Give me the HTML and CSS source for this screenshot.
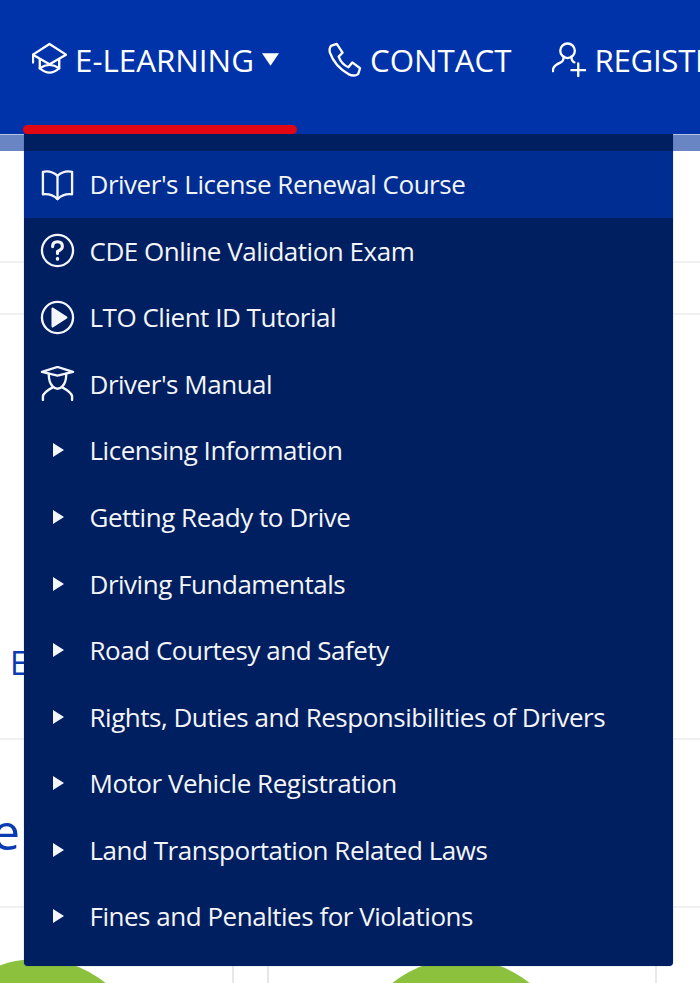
FILE: index.html
```html
<!DOCTYPE html>
<html lang="en">
<head>
	<title>E-Learning menu</title>
	<meta charset="utf-8">
	<link rel="stylesheet" href="styles.css">
</head>
<body>
	<nav class="topBar">
		<a class="navItem navItem_learning">
			<svg class="navIcon" viewBox="0 0 36 36"><path d="M18 2 L35 13 L18 23 L1 13 Z"/><path d="M8 18 V27 Q18 36 28 27 V18"/><path d="M8 27 Q18 20 28 27"/><path d="M1 13 V21"/></svg>
			E-LEARNING
			<svg class="caret" viewBox="0 0 18 13"><path d="M0 0 H18 L9 13 Z"/></svg>
		</a>
		<a class="navItem">
			<svg class="navIcon" viewBox="0 0 36 36"><path d="M4 4 L10 2 L16 11 L12 15 Q15 23 22 26 L26 21 L34 27 L32 33 Q28 36 22 33 Q8 25 3 11 Q2 7 4 4 Z"/></svg>
			CONTACT
		</a>
		<a class="navItem navItem_register">
			<svg class="navIcon" viewBox="0 0 36 36"><circle cx="16" cy="9" r="7.5"/><path d="M1 30 V28 Q2 24 9 21 Q12 20 12 15 M20 15 Q20 20 23 21"/><path d="M27 22 V35 M20 29 H34"/></svg>
			REGISTER
		</a>
	</nav>

	<div class="page">
		<div class="strip"></div>
		<div class="row row_a"></div>
		<div class="row row_b"></div>
		<div class="row row_c"><span class="smallWord">E</span></div>
		<div class="row row_d"><span class="bigWord">e</span></div>
		<div class="row_e">
			<div class="cell cell_a"><span class="ball ball_left"></span></div>
			<div class="cell cell_b"></div>
			<div class="cell cell_c"><span class="ball ball_right"></span></div>
		</div>
	</div>

	<section class="dropMenu">
		<a class="menuItem menuItem_active">
			<span class="menuIcon"><svg viewBox="0 0 36 36"><path d="M18 9 Q11 3 3 5 V28 Q12 27 18 33 Q24 27 33 28 V5 Q25 3 18 9 Z"/><path d="M18 9 V33"/></svg></span>
			Driver's License Renewal Course
		</a>
		<a class="menuItem">
			<span class="menuIcon"><svg viewBox="0 0 36 36"><circle cx="18" cy="18" r="16"/><path class="thick" d="M13 14 Q13 9 18 9 Q23 9 23 14 Q23 17 18 19 V21"/><path class="thick" d="M18 26 V27"/></svg></span>
			CDE Online Validation Exam
		</a>
		<a class="menuItem">
			<span class="menuIcon"><svg viewBox="0 0 36 36"><circle cx="18" cy="18" r="16"/><path class="solid" d="M13 9 L27 18 L13 27 Z"/></svg></span>
			LTO Client ID Tutorial
		</a>
		<a class="menuItem">
			<span class="menuIcon"><svg viewBox="0 0 36 36"><path d="M18 1 L34 6 L18 10 L2 6 Z"/><path d="M9 8 Q9 17 13 21 Q18 26 23 21 Q27 17 27 8"/><path d="M3 35 V31 Q4 27 13 22 M33 35 V31 Q32 27 23 22"/></svg></span>
			Driver's Manual
		</a>
		<a class="menuItem"><span class="menuIcon"><i class="tri"></i></span>Licensing Information</a>
		<a class="menuItem"><span class="menuIcon"><i class="tri"></i></span>Getting Ready to Drive</a>
		<a class="menuItem"><span class="menuIcon"><i class="tri"></i></span>Driving Fundamentals</a>
		<a class="menuItem"><span class="menuIcon"><i class="tri"></i></span>Road Courtesy and Safety</a>
		<a class="menuItem"><span class="menuIcon"><i class="tri"></i></span>Rights, Duties and Responsibilities of Drivers</a>
		<a class="menuItem"><span class="menuIcon"><i class="tri"></i></span>Motor Vehicle Registration</a>
		<a class="menuItem"><span class="menuIcon"><i class="tri"></i></span>Land Transportation Related Laws</a>
		<a class="menuItem"><span class="menuIcon"><i class="tri"></i></span>Fines and Penalties for Violations</a>
	</section>
</body>
</html>
```

FILE: styles.css
```css
html, body{ width:100%; height:100%; margin:0; overflow:hidden; background-color:#fff; font-family:"Open Sans", sans-serif; }

.topBar{
	display:flex;
	align-items:center;
	gap:40px;
	height:134px;
	padding:0 0 15px 32px;
	box-sizing:border-box;
	background-color:#0033a9;
	color:#fff;
	white-space:nowrap;
	overflow:hidden;
}
.navItem{ display:flex; flex:none; align-items:center; gap:8px; font-size:31.3px; }
.navItem_learning{ margin-right:8px; }
.navItem_register{ letter-spacing:-0.35px; }
.navIcon{ width:35px; height:35px; flex:none; fill:none; stroke:#fff; stroke-width:2.4; stroke-linecap:round; stroke-linejoin:round; }
.caret{ width:17px; height:13px; fill:#fff; }

.page{ height:849px; overflow:hidden; }
.strip{ height:17px; background-color:#6a85c3; border-top:1px solid #b4c2e2; box-sizing:border-box; }
.row{ display:flex; box-sizing:border-box; border-bottom:2px solid #f0f0f0; }
.row_a{ height:112px; }
.row_b{ height:52px; }
.row_c{ height:425px; padding:326px 0 0 10px; }
.row_d{ height:168px; padding:57px 0 0 0; }

.smallWord{ font-size:32px; line-height:44px; color:#0a3bb0; }
.bigWord{ font-size:50px; line-height:68px; margin-left:-8px; color:#0a3bb0; }

.row_e{ display:flex; height:80px; }
.cell{ box-sizing:border-box; height:80px; flex:none; border-right:2px solid #e8e8e8; }
.cell_a{ width:234px; }
.cell_b{ width:35px; }
.cell_c{ width:388px; }
.ball{ display:block; width:220px; height:220px; margin-top:51px; border-radius:50%; background-color:#8bc13c; }
.ball_left{ margin-left:-73px; }
.ball_right{ margin-left:82px; }

.dropMenu{
	position:absolute;
	left:24px; top:134px;
	width:649px;
	padding:17px 0 16px 0;
	box-sizing:border-box;
	background-color:#001f60;
	border-radius:0 0 4px 4px;
	box-shadow:0 0 1px rgba(0,51,169,0.7);
	color:#f4f5f9;
	font-size:26px;
	letter-spacing:-0.48px;
}
.dropMenu::before{
	content:"";
	position:absolute;
	left:-1px; top:-9px;
	width:274px; height:9px;
	background-color:#e30613;
	border-radius:5px;
}
.menuItem{ display:flex; align-items:center; height:66.55px; padding-left:15px; white-space:nowrap; }
.menuItem_active{ background-color:#002d91; }
.menuIcon{ display:flex; justify-content:center; align-items:center; width:36px; margin-right:14.5px; flex:none; }
.menuIcon svg{ width:35px; height:35px; fill:none; stroke:#f4f5f9; stroke-width:2.4; stroke-linecap:round; stroke-linejoin:round; }
.menuIcon .thick{ stroke-width:3.2; }
.menuIcon .solid{ fill:#f4f5f9; }
.tri{ width:0; height:0; margin-left:2px; border-left:11px solid #f4f5f9; border-top:7px solid transparent; border-bottom:7px solid transparent; }
```
